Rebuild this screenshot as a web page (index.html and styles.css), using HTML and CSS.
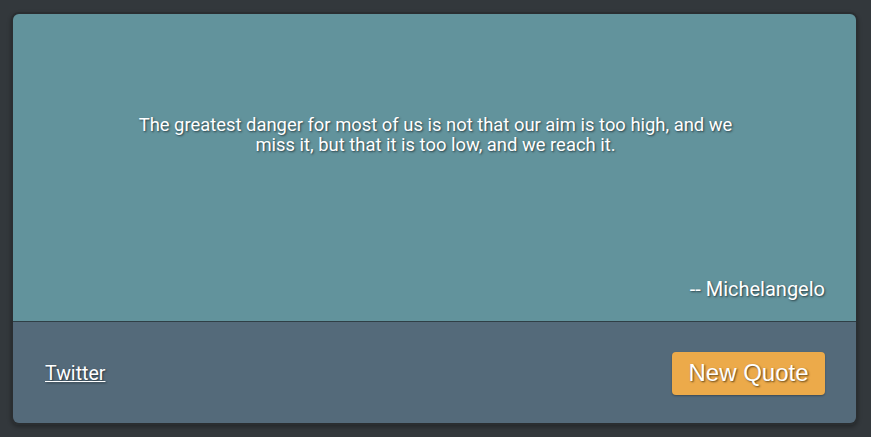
FILE: index.html
```html
<!DOCTYPE html>
<html>
<head>
<meta charset="utf-8">
<link rel="stylesheet" href="styles.css">
</head>
<body>
<div class="card">
  <div class="quote-area">
    <p class="quote">The greatest danger for most of us is not that our aim is too high, and we miss it, but that it is too low, and we reach it.</p>
    <p class="author">-- Michelangelo</p>
  </div>
  <div class="actions">
    <a class="twitter" href="#">Twitter</a>
    <button class="new-quote">New Quote</button>
  </div>
</div>
</body>
</html>
```
FILE: styles.css
```css
html, body {
  margin: 0;
  height: 100%;
  background: #33383c;
}
body {
  padding: 12px 0 0 11px;
  box-sizing: border-box;
}
.card {
  width: 847px;
  height: 413px;
  box-sizing: border-box;
  border: 2px solid #2a2e31;
  border-radius: 8px;
  overflow: hidden;
  display: flex;
  flex-direction: column;
  box-shadow: 0 2px 4px rgba(0,0,0,0.3);
}
.quote-area {
  background: #62939c;
  height: 308px;
  box-sizing: border-box;
  border-bottom: 1px solid #2f3f46;
  padding: 101px 31px 0 33px;
  display: flex;
  flex-direction: column;
  color: #fff;
  font-family: Roboto, "Liberation Sans", sans-serif;
  text-shadow: 1px 1px 2px rgba(20,30,35,0.7);
}
.quote {
  margin: 0 auto;
  width: 610px;
  text-align: center;
  font-size: 18.4px;
  line-height: 20px;
}
.author {
  margin: auto 0 20px 0;
  text-align: right;
  font-size: 20px;
  line-height: 24px;
}
.actions {
  flex: 1;
  background: #546a7a;
  display: flex;
  align-items: center;
  justify-content: space-between;
  padding: 0 31px 0 32px;
}
.twitter {
  color: #fff;
  font-family: Roboto, "Liberation Sans", sans-serif;
  font-size: 19.6px;
  text-shadow: 1px 1px 2px rgba(20,30,35,0.7);
  margin-top: 1px;
}
.new-quote {
  background: #ecaa4a;
  color: #fff;
  border: none;
  border-radius: 4px;
  font-family: "Liberation Sans", Arial, sans-serif;
  font-size: 24px;
  height: 43px;
  width: 153px;
  padding: 0;
  text-shadow: 1px 1px 2px rgba(60,40,10,0.8);
  box-shadow: 0 1px 2px rgba(0,0,0,0.3);
  margin-top: 1px;
}
```
